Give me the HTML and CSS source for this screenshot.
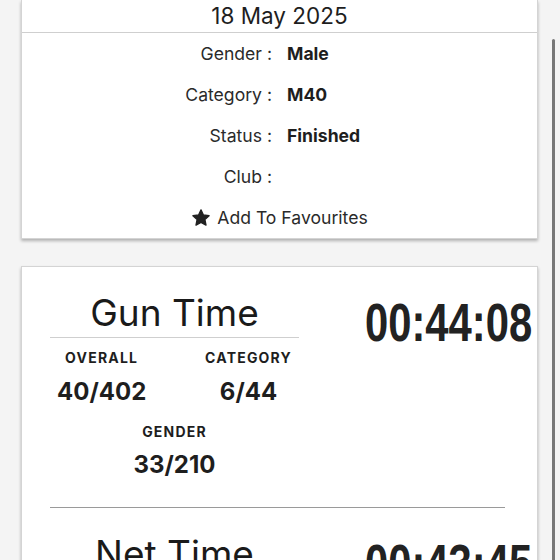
FILE: index.html
```html
<!DOCTYPE html>
<html>
<head>
<meta charset="utf-8">
<link rel="stylesheet" href="styles.css">
</head>
<body>
<div class="page">
  <div class="card info">
    <div class="date">18 May 2025</div>
    <div class="rows">
      <div class="row"><span class="lbl">Gender :</span><span class="val">Male</span></div>
      <div class="row"><span class="lbl">Category :</span><span class="val">M40</span></div>
      <div class="row"><span class="lbl">Status :</span><span class="val">Finished</span></div>
      <div class="row"><span class="lbl">Club :</span><span class="val"></span></div>
    </div>
    <div class="fav">
      <svg class="star" viewBox="0 0 24 24" width="20" height="20"><path d="M12 2.2l2.9 6.2 6.8.8-5 4.7 1.3 6.7L12 17.3l-6 3.3 1.3-6.7-5-4.7 6.8-.8z" fill="#222" stroke="#222" stroke-width="1.6" stroke-linejoin="round"/></svg>
      <span>Add To Favourites</span>
    </div>
  </div>

  <div class="card times">
    <div class="block">
      <div class="left">
        <div class="title">Gun Time</div>
        <div class="stats">
          <div class="stat"><div class="slbl">OVERALL</div><div class="sval">40/402</div></div>
          <div class="stat"><div class="slbl">CATEGORY</div><div class="sval">6/44</div></div>
        </div>
        <div class="stat single"><div class="slbl">GENDER</div><div class="sval">33/210</div></div>
      </div>
      <div class="clock"><span>00:44:08</span></div>
    </div>
    <div class="sep"></div>
    <div class="block">
      <div class="left">
        <div class="title">Net Time</div>
      </div>
      <div class="clock"><span>00:43:45</span></div>
    </div>
  </div>
</div>
<div class="scrollbar"></div>
</body>
</html>
```

FILE: styles.css
```css
html, body {
  margin: 0;
  padding: 0;
  background: #f4f4f4;
  font-family: "Inter", "Roboto", "Liberation Sans", sans-serif;
  color: #1e1e1e;
  overflow: hidden;
  height: 560px;
}
.page {
  padding: 0 22px 0 21px;
}
.card {
  background: #fff;
  border: 1px solid #d4d4d4;
  box-shadow: 0 2px 3px rgba(0,0,0,0.28);
}
.info {
  border-top: none;
}
.date {
  font-size: 22.5px;
  line-height: 26px;
  text-align: center;
  padding: 3px 0 3px;
  border-bottom: 1px solid #cfcfcf;
}
.row {
  display: grid;
  grid-template-columns: 1fr 1fr;
  column-gap: 15px;
  height: 41px;
  align-items: center;
  font-size: 17.6px;
}
.lbl {
  text-align: right;
  color: #2a2a2a;
}
.val {
  font-weight: 700;
}
.fav {
  display: flex;
  justify-content: center;
  align-items: center;
  gap: 6px;
  height: 41px;
  font-size: 17.6px;
  color: #2a2a2a;
}
.star {
  display: block;
}
.times {
  margin-top: 27px;
  padding: 0 5px 0 28px;
  height: 400px;
}
.block {
  display: flex;
  justify-content: space-between;
  align-items: flex-start;
}
.left {
  width: 249px;
}
.title {
  font-size: 37px;
  line-height: 42px;
  text-align: center;
  padding: 25px 0 3px;
  border-bottom: 1px solid #cfcfcf;
  color: #1a1a1a;
}
.stats {
  display: flex;
  justify-content: space-between;
  padding: 0 7px;
}
.stat {
  text-align: center;
}
.slbl {
  font-size: 14px;
  line-height: 18px;
  font-weight: 700;
  letter-spacing: 1.2px;
  margin-top: 11px;
}
.sval {
  font-size: 24px;
  line-height: 30px;
  font-weight: 700;
  margin-top: 10px;
}
.single .slbl {
  margin-top: 16px;
}
.single .sval {
  margin-top: 9px;
}
.sep {
  height: 1px;
  background: #9a9a9a;
  margin: 27px 27px 0 0;
}
.clock {
  padding-top: 32px;
}
.clock span {
  display: inline-block;
  font-family: "Liberation Sans Narrow", "Liberation Sans", sans-serif;
  font-weight: 700;
  font-size: 48px;
  line-height: 48px;
  color: #222;
  transform-origin: right center;
  transform: scale(0.87, 1.11);
}
.scrollbar {
  position: absolute;
  left: 552px;
  top: 39px;
  width: 3px;
  height: 530px;
  border-radius: 2px;
  background: #777;
}
```
